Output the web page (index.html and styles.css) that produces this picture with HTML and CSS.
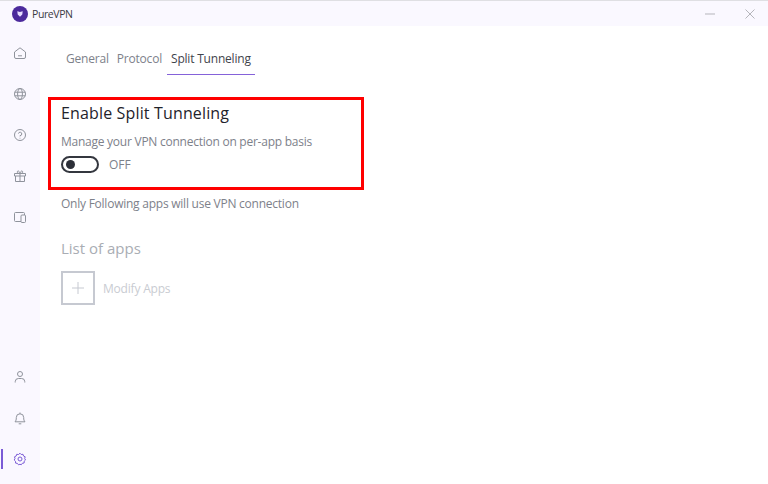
FILE: index.html
```html
<!DOCTYPE html>
<html lang="en">
<head>
<meta charset="utf-8">
<title>PureVPN</title>
<link rel="stylesheet" href="styles.css">
</head>
<body>
<div class="window">
  <header class="titlebar">
    <div class="brand">
      <svg class="logo" viewBox="0 0 16 16"><circle cx="8" cy="8" r="8" fill="#4b2a9c"/><path d="M5.300 5.200 8 6l2.700-.8-.4 3.200L8 10.800 5.700 8.400z" fill="#e6dcff"/></svg>
      <span class="brand-name">PureVPN</span>
    </div>
    <div class="win-controls">
      <svg class="win-icon" viewBox="0 0 10 10"><path d="M0 5h10" stroke="#b5b5bb" fill="none"/></svg>
      <svg class="win-icon" viewBox="0 0 10 10"><path d="M.5.500l9 9M9.500.500l-9 9" stroke="#b5b5bb" fill="none"/></svg>
    </div>
  </header>
  <div class="body">
    <nav class="sidebar">
      <div class="nav-group">
        <span class="nav-item"><svg class="icon" viewBox="0 0 14 14"><path d="M1.500 6 7 1.800 12.500 6v5a1.500 1.500 0 0 1-1.500 1.500H3A1.500 1.500 0 0 1 1.500 11z M5 9.800h4"/></svg></span>
        <span class="nav-item"><svg class="icon" viewBox="0 0 14 14"><circle cx="7" cy="7" r="5.500"/><ellipse cx="7" cy="7" rx="2.400" ry="5.500"/><path d="M1.800 5.200h10.400M1.800 8.800h10.400"/></svg></span>
        <span class="nav-item"><svg class="icon" viewBox="0 0 14 14"><circle cx="7" cy="7" r="5.500"/><path d="M5.400 5.600A1.700 1.700 0 1 1 7 7.600v.8M7 9.800v.7"/></svg></span>
        <span class="nav-item"><svg class="icon" viewBox="0 0 14 14"><path d="M1.500 4.500h11v2.500h-11zM2.500 7v5.500h9V7M7 4.500v8M7 4.500C5 4.500 3.800 3.600 4.400 2.400 5.100 1.200 6.600 2.400 7 4.500zM7 4.500c2 0 3.200-.9 2.600-2.100C8.900 1.200 7.400 2.400 7 4.500z"/></svg></span>
        <span class="nav-item"><svg class="icon" viewBox="0 0 14 14"><path d="M8 11.500H2.500a1 1 0 0 1-1-1v-7a1 1 0 0 1 1-1h8a1 1 0 0 1 1 1V5"/><rect x="8" y="5" width="4.500" height="7.500" rx="1"/></svg></span>
      </div>
      <div class="nav-group">
        <span class="nav-item"><svg class="icon" viewBox="0 0 14 14"><circle cx="7" cy="4" r="2.500"/><path d="M2.200 12.500v-.8A3.200 3.200 0 0 1 5.400 8.500h3.200a3.200 3.200 0 0 1 3.200 3.200v.8"/></svg></span>
        <span class="nav-item"><svg class="icon" viewBox="0 0 14 14"><path d="M2 10.800c1-1 1.300-2 1.300-4.300a3.700 3.700 0 0 1 7.400 0c0 2.300.3 3.300 1.300 4.300zM5.700 12.800h2.600M7 2.800V1.500"/></svg></span>
        <span class="nav-item active"><svg class="icon" viewBox="0 0 14 14"><path d="M7 1.200 8.200 2.500l1.800-.2.500 1.700 1.700.8-.5 1.700.8 1.500-1.300 1.200-.1 1.800-1.800.3L8.200 12.800 7 12.200l-1.500.6-1.100-1.400-1.800-.3-.1-1.800L1.200 8l.8-1.500-.5-1.700L3.200 4l.5-1.700 1.800.2z"/><circle cx="7" cy="7" r="2"/></svg></span>
      </div>
    </nav>
    <main class="content">
      <div class="tabs">
        <span class="tab">General</span>
        <span class="tab">Protocol</span>
        <span class="tab tab-active">Split Tunneling</span>
      </div>
      <section class="highlight">
        <h1 class="heading">Enable Split Tunneling</h1>
        <p class="desc">Manage your VPN connection on per-app basis</p>
        <div class="toggle-row">
          <span class="toggle"><span class="knob"></span></span>
          <span class="toggle-label">OFF</span>
        </div>
      </section>
      <p class="note">Only Following apps will use VPN connection</p>
      <h2 class="subheading">List of apps</h2>
      <div class="modify">
        <span class="add-box"><svg class="plus" viewBox="0 0 14 14"><path d="M7 1v12M1 7h12"/></svg></span>
        <span class="modify-label">Modify Apps</span>
      </div>
    </main>
  </div>
</div>
</body>
</html>
```
FILE: styles.css
```css
* { box-sizing: border-box; }
html, body { margin: 0; padding: 0; height: 100%; }
body { font-family: "Open Sans", "Noto Sans", "Liberation Sans", sans-serif; background: #fff; }
.window { width: 768px; height: 484px; display: flex; flex-direction: column; background: #faf8ff; border-top: 1px solid #dfdfe3; overflow: hidden; }
.titlebar { height: 25px; flex: none; display: flex; align-items: center; justify-content: space-between; padding: 1px 13px 0 12px; }
.brand { display: flex; align-items: center; gap: 4px; }
.logo { width: 16px; height: 16px; display: block; }
.brand-name { font-size: 10.500px; letter-spacing: -.4px; color: #3a3a44; }
.win-controls { display: flex; gap: 30px; }
.win-icon { width: 10px; height: 10px; display: block; }
.body { flex: 1; display: flex; min-height: 0; }
.sidebar { width: 40px; flex: none; display: flex; flex-direction: column; justify-content: space-between; padding: 15px 0 13px; }
.nav-group { display: flex; flex-direction: column; gap: 17px; }
.nav-item { height: 24px; display: flex; align-items: center; justify-content: center; position: relative; }
.icon { width: 14px; height: 14px; fill: none; stroke: #8f939c; stroke-width: 1; }
.active .icon { stroke: #7a5bd6; }
.active::before { content: ""; position: absolute; left: 1px; top: 2px; width: 2px; height: 20px; background: #7a5bd6; }
.content { flex: 1; background: #fff; padding: 19px 0 0 8px; min-width: 0; }
.tabs { display: flex; gap: 8px; margin-left: 18px; height: 30px; }
.tab { font-size: 12px; line-height: 28px; color: #7d818a; letter-spacing: -.2px; }
.tab-active { color: #3f434c; border-bottom: 1px solid #8562d9; padding: 0 4px; margin-left: -3px; margin-right: -4px; }
.highlight { width: 316px; height: 93px; margin-top: 22px; border: 3px solid #f00; padding: 1px 0 0 10px; }
.heading { margin: 0; font-size: 16px; font-weight: 400; line-height: 24px; color: #1f232b; letter-spacing: .15px; }
.desc { margin: 9px 0 0; font-size: 12px; line-height: 16px; color: #7d818a; letter-spacing: -.25px; }
.toggle-row { display: flex; align-items: center; gap: 10px; margin-top: 6px; }
.toggle { width: 38px; height: 17px; border: 2px solid #34373f; border-radius: 9px; display: flex; align-items: center; padding-left: 3px; }
.knob { width: 9px; height: 9px; border-radius: 50%; background: #2c2f38; }
.toggle-label { font-size: 12px; color: #7d818a; }
.note { margin: 6px 0 0 13px; font-size: 12px; line-height: 16px; color: #7d818a; letter-spacing: -.24px; }
.subheading { margin: 26px 0 0 13px; font-size: 15px; font-weight: 400; line-height: 20px; color: #a9adb4; }
.modify { display: flex; align-items: center; gap: 8px; margin: 13px 0 0 13px; }
.add-box { width: 34px; height: 34px; border: 2px solid #c6c9d1; display: flex; align-items: center; justify-content: center; }
.plus { width: 14px; height: 14px; fill: none; stroke: #c6c9d1; stroke-width: 1; }
.modify-label { font-size: 12px; color: #c9ccd2; letter-spacing: -.2px; }
```
